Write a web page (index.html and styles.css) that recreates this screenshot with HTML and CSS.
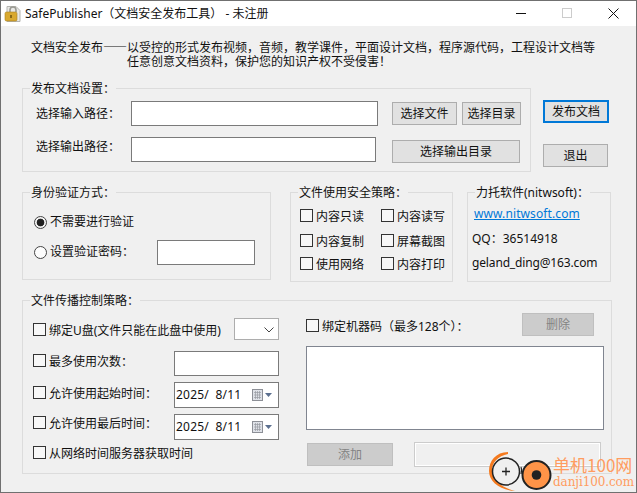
FILE: index.html
```html
<!DOCTYPE html>
<html lang="zh-CN">
<head>
<meta charset="utf-8">
<title>SafePublisher</title>
<link rel="stylesheet" href="styles.css">
</head>
<body>
<div class="window">
  <header class="titlebar">
    <svg class="app-icon" width="18" height="18" viewBox="0 0 18 18">
      <path d="M3 1.500h9l4 4v11H3z" fill="#e9e9e6" stroke="#b4b4b0"/>
      <path d="M6 7V5a3 3 0 0 1 6 0v2" fill="none" stroke="#9a9a92" stroke-width="1.600"/>
      <rect x="1" y="7" width="12" height="9" rx="1.500" fill="#d9a92f" stroke="#a8801e" stroke-width=".6"/>
      <rect x="6" y="10" width="2" height="3" fill="#8a6a16"/>
    </svg>
    <span class="title-text">SafePublisher（文档安全发布工具） - 未注册</span>
    <div class="controls">
      <svg width="11" height="11" viewBox="0 0 11 11"><path d="M0 5.500h10" stroke="#111" stroke-width="1"/></svg>
      <svg width="11" height="11" viewBox="0 0 11 11"><rect x=".5" y=".5" width="9" height="9" fill="none" stroke="#ccc"/></svg>
      <svg width="11" height="11" viewBox="0 0 11 11"><path d="M.5.5l10 10M10.500.5l-10 10" stroke="#111" stroke-width="1"/></svg>
    </div>
  </header>

  <main class="client">
    <div class="intro">
      <p>文档安全发布<span class="dash">——</span>以受控的形式发布视频，音频，教学课件，平面设计文档，程序源代码，工程设计文档等</p>
      <p class="intro-cont">任意创意文档资料，保护您的知识产权不受侵害！</p>
    </div>

    <div class="top-row">
      <section class="group publish">
        <span class="legend">发布文档设置：</span>
        <div class="path-row">
          <label class="path-label">选择输入路径：</label>
          <input class="field in-path" type="text">
          <button class="btn btn-file">选择文件</button>
          <button class="btn btn-dir">选择目录</button>
        </div>
        <div class="path-row second">
          <label class="path-label">选择输出路径：</label>
          <input class="field out-path" type="text">
          <button class="btn btn-out">选择输出目录</button>
        </div>
      </section>
      <div class="actions">
        <button class="btn btn-primary">发布文档</button>
        <button class="btn btn-exit">退出</button>
      </div>
    </div>

    <div class="middle-row">
      <section class="group auth">
        <span class="legend">身份验证方式：</span>
        <label class="auth-row"><input class="radio" type="radio" name="auth" checked><span>不需要进行验证</span></label>
        <div class="auth-row pw">
          <label class="pw-label"><input class="radio" type="radio" name="auth"><span>设置验证密码：</span></label>
          <input class="field pw-field" type="text">
        </div>
      </section>
      <section class="group policy">
        <span class="legend">文件使用安全策略：</span>
        <div class="policy-grid">
          <label class="opt"><input class="check" type="checkbox"><span>内容只读</span></label>
          <label class="opt"><input class="check" type="checkbox"><span>内容读写</span></label>
          <label class="opt"><input class="check" type="checkbox"><span>内容复制</span></label>
          <label class="opt"><input class="check" type="checkbox"><span>屏幕截图</span></label>
          <label class="opt"><input class="check" type="checkbox"><span>使用网络</span></label>
          <label class="opt"><input class="check" type="checkbox"><span>内容打印</span></label>
        </div>
      </section>
      <section class="group about">
        <span class="legend">力托软件(nitwsoft)：</span>
        <a class="link" href="#">www.nitwsoft.com</a>
        <p class="qq">QQ：36514918</p>
        <p class="mail">geland_ding@163.com</p>
      </section>
    </div>

    <section class="group spread">
      <span class="legend">文件传播控制策略：</span>
      <div class="spread-left">
        <div class="ctl-row r1">
          <label class="opt"><input class="check" type="checkbox"><span>绑定U盘(文件只能在此盘中使用)</span></label>
          <div class="select"><svg width="10" height="6" viewBox="0 0 10 6"><path d="M.5.5L5 5 9.500.5" fill="none" stroke="#444"/></svg></div>
        </div>
        <div class="ctl-row r2">
          <label class="opt"><input class="check" type="checkbox"><span>最多使用次数：</span></label>
          <input class="field ctl-field" type="text">
        </div>
        <div class="ctl-row r3">
          <label class="opt"><input class="check" type="checkbox"><span>允许使用起始时间：</span></label>
          <div class="date">
            <span class="date-text">2025/&nbsp;&nbsp;8/11</span>
            <svg width="21" height="13" viewBox="0 0 21 13">
              <rect x=".5" y=".5" width="10" height="11" fill="#dfe2e8" stroke="#8d9097"/>
              <path d="M2 3.500h7M2 6h7M2 8.500h7M3.500 2v8M5.500 2v8M7.500 2v8" stroke="#989ba2" stroke-width=".7"/>
              <path d="M13 4h7l-3.500 4z" fill="#5b6f8f"/>
            </svg>
          </div>
        </div>
        <div class="ctl-row r4">
          <label class="opt"><input class="check" type="checkbox"><span>允许使用最后时间：</span></label>
          <div class="date">
            <span class="date-text">2025/&nbsp;&nbsp;8/11</span>
            <svg width="21" height="13" viewBox="0 0 21 13">
              <rect x=".5" y=".5" width="10" height="11" fill="#dfe2e8" stroke="#8d9097"/>
              <path d="M2 3.500h7M2 6h7M2 8.500h7M3.500 2v8M5.500 2v8M7.500 2v8" stroke="#989ba2" stroke-width=".7"/>
              <path d="M13 4h7l-3.500 4z" fill="#5b6f8f"/>
            </svg>
          </div>
        </div>
        <div class="ctl-row r5">
          <label class="opt"><input class="check" type="checkbox"><span>从网络时间服务器获取时间</span></label>
        </div>
      </div>
      <div class="spread-right">
        <div class="machine-head">
          <label class="opt"><input class="check" type="checkbox"><span>绑定机器码（最多128个）：</span></label>
          <button class="btn btn-disabled btn-del" disabled>删除</button>
        </div>
        <textarea class="machine-list"></textarea>
        <div class="machine-foot">
          <button class="btn btn-disabled btn-add" disabled>添加</button>
          <div class="code-box"></div>
        </div>
      </div>
    </section>
  </main>

  <div class="watermark">
    <svg width="65" height="42" viewBox="0 0 65 42">
      <path d="M20 2C8 2 1 11 1 21c0 11 11 19 26 20-11-3-22-9-23-20C4 12 10 6 20 4z" fill="#f47a1f"/>
      <circle cx="18" cy="21.500" r="13.500" fill="#efefef" stroke="#222" stroke-width="1.500"/>
      <path d="M14 21.500h8M18 17.500v8" stroke="#222" stroke-width="1.300"/>
      <path d="M33 17c1 2 1 4 0 7" fill="none" stroke="#222" stroke-width="1.200"/>
      <circle cx="48.500" cy="25" r="14" fill="#ff9448" stroke="#222" stroke-width="2"/>
      <circle cx="48.500" cy="25" r="4.800" fill="#222"/>
    </svg>
    <div class="wm-text">
      <span class="wm-name">单机100网</span>
      <span class="wm-url">danji100.com</span>
    </div>
  </div>
</div>
</body>
</html>
```

FILE: styles.css
```css
* { box-sizing: border-box; }
html, body { margin: 0; padding: 0; }
body {
  font-family: "Noto Sans", "Noto Sans CJK SC", sans-serif;
  font-size: 12px;
  line-height: 14px;
  color: #111;
}
p { margin: 0; }

.window {
  position: relative;
  width: 637px;
  height: 493px;
  border: 1px solid #707070;
  background: #f0f0f0;
  overflow: hidden;
  display: flex;
  flex-direction: column;
}

.titlebar {
  height: 25px;
  flex: none;
  background: #fff;
  display: flex;
  align-items: center;
  padding-left: 3px;
}
.app-icon { flex: none; }
.title-text { margin-left: 3px; font-size: 12px; }
.controls {
  margin-left: auto;
  display: flex;
  align-items: center;
  gap: 35px;
  padding-right: 17px;
}

.client { flex: 1; padding: 14px 0 0 21px; }

.intro { padding-left: 9px; white-space: nowrap; }
.intro-cont { padding-left: 96px; }
.dash { font-family: "Noto Sans CJK SC", sans-serif; }

.group {
  position: relative;
  border: 1px solid #dcdcdc;
}
.legend {
  position: absolute;
  top: -8px;
  left: 7px;
  padding: 0 1px;
  background: #f0f0f0;
  line-height: 15px;
  white-space: nowrap;
}

.field {
  display: block;
  height: 25px;
  margin: 0;
  padding: 0 3px;
  border: 1px solid #7a7a7a;
  border-radius: 0;
  background: #fff;
  outline: none;
}

.btn {
  display: block;
  margin: 0;
  padding: 0;
  height: 23px;
  border: 1px solid #adadad;
  border-radius: 0;
  background: #e1e1e1;
  color: #111;
  font: inherit;
}
.btn-disabled {
  background: #ccc;
  border-color: #bfbfbf;
  color: #838383;
}
.btn-primary {
  width: 66px;
  border: 2px solid #0078d7;
}
.btn-exit { width: 65px; margin-top: 21px; }

/* top */
.top-row { display: flex; margin-top: 19px; }
.publish { width: 509px; height: 84px; padding: 12px 0 0 13px; }
.path-row { display: flex; align-items: flex-start; height: 25px; }
.path-row.second { margin-top: 11px; }
.path-label { width: 95px; line-height: 26px; }
.second .path-label { line-height: 20px; }
.in-path { width: 247px; }
.out-path { width: 245px; }
.btn-file { width: 65px; margin: 1px 0 0 14px; }
.btn-dir { width: 59px; margin: 1px 0 0 5px; }
.btn-out { width: 128px; margin: 3px 0 0 16px; }
.actions { margin: 12px 0 0 12px; }

/* middle */
.middle-row { display: flex; align-items: flex-start; margin-top: 20px; }
.auth { width: 249px; height: 88px; padding: 19px 0 0 11px; }
.auth-row { display: flex; align-items: center; height: 20px; }
.auth-row.pw { margin-top: 10px; }
.pw-label { display: flex; align-items: center; width: 123px; }
.pw-field { width: 98px; flex: none; }
.radio {
  appearance: none;
  flex: none;
  width: 13px;
  height: 13px;
  margin: 0 3px 0 0;
  border: 1px solid #444;
  border-radius: 50%;
  background: #fdfdfd;
}
.radio:checked {
  background: radial-gradient(circle, #222 0, #222 3.500px, #f5f5f5 4.200px);
}
.check {
  appearance: none;
  flex: none;
  width: 13px;
  height: 13px;
  margin: 0 3px 0 0;
  border: 1px solid #333;
  border-radius: 0;
  background: #f7f7f7;
}
.opt { display: flex; align-items: flex-start; white-space: nowrap; }
.opt span { position: relative; top: 1px; }
.policy { width: 163px; height: 90px; margin-left: 19px; padding: 16px 0 0 9px; }
.policy-grid {
  display: grid;
  grid-template-columns: 81px 65px;
  grid-template-rows: 25px 23px 20px;
}
.about { width: 144px; height: 90px; margin-left: 14px; padding: 14px 0 0 4px; }
.link {
  display: block;
  margin-left: 2px;
  color: #0078d7;
  text-decoration: underline;
  letter-spacing: .1px;
}
.qq { margin-top: 11px; }
.mail { margin-top: 10px; letter-spacing: -.15px; }

/* bottom */
.spread {
  display: flex;
  width: 590px;
  height: 174px;
  margin-top: 18px;
}
.spread-left { width: 283px; padding: 17px 0 0 10px; flex: none; }
.ctl-row { display: flex; justify-content: space-between; padding-right: 27px; }
.ctl-row .opt { padding-top: 3px; }
.r1 { height: 22px; }
.r1 .opt { padding-top: 5px; }
.r2 { margin-top: 11px; }
.r3 { margin-top: 6px; }
.r3 .opt { padding-top: 4px; }
.r4 { margin-top: 6px; }
.r4 .opt { padding-top: 2px; }
.r5 { margin-top: 6px; }
.r5 .opt { padding-top: 0; }
.select {
  width: 45px;
  height: 22px;
  flex: none;
  border: 1px solid #adadad;
  background: #fff;
  display: flex;
  align-items: center;
  justify-content: flex-end;
  padding: 2px 4px 0 0;
}
.ctl-field { width: 105px; flex: none; }
.date {
  width: 105px;
  height: 26px;
  flex: none;
  border: 1px solid #7a7a7a;
  background: #fff;
  display: flex;
  align-items: center;
  justify-content: space-between;
  padding: 0 5px 0 1px;
}
.date-text { white-space: pre; font-size: 12px; letter-spacing: .2px; }

.spread-right { flex: 1; }
.machine-head {
  display: flex;
  justify-content: space-between;
  padding: 12px 17px 0 0;
  height: 35px;
}
.machine-head .opt { padding-top: 6px; }
.btn-del { width: 72px; }
.machine-list {
  display: block;
  width: 298px;
  height: 84px;
  margin: 10px 0 0 0;
  border: 1px solid #808590;
  border-radius: 0;
  background: #fff;
  resize: none;
  outline: none;
}
.machine-foot { display: flex; align-items: flex-start; margin-top: 12px; }
.btn-add { width: 86px; margin: 1px 0 0 1px; }
.code-box {
  width: 187px;
  height: 25px;
  margin-left: 21px;
  border: 1px solid #ccc;
  box-shadow: inset 0 0 0 1px #fff;
}

/* watermark over the corner */
.watermark {
  position: absolute;
  right: 2px;
  bottom: 0;
  display: flex;
  align-items: flex-end;
  color: #ff9c60;
}
.wm-text { display: flex; flex-direction: column; margin-bottom: 3px; }
.wm-name { font-size: 17px; line-height: 21px; font-family: "Noto Sans CJK SC", sans-serif; white-space: nowrap; }
.wm-url { font-size: 12px; line-height: 14px; font-family: "DejaVu Serif", serif; letter-spacing: -.1px; white-space: nowrap; }
```
